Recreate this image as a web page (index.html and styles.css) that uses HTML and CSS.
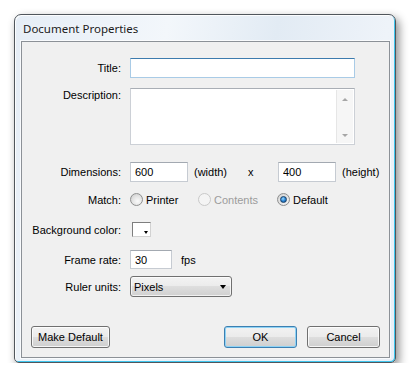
FILE: index.html
```html
<!DOCTYPE html>
<html lang="en">
<head>
    <meta charset="UTF-8">
    <title>Document Properties</title>
    <link rel="stylesheet" href="styles.css">
</head>
<body>
    <div class="window">
        <div class="titlebar">Document Properties</div>
        <div class="client">
            <div class="row r-title">
                <span class="lbl">Title:</span>
                <input class="field focused" type="text" value="">
            </div>
            <div class="row r-desc">
                <span class="lbl">Description:</span>
                <div class="area">
                    <div class="area-text"></div>
                    <div class="vscroll">
                        <span class="arr up"></span>
                        <span class="arr down"></span>
                    </div>
                </div>
            </div>
            <div class="row r-dims">
                <span class="lbl">Dimensions:</span>
                <input class="field num" type="text" value="600">
                <span class="unit">(width)</span>
                <span class="times">x</span>
                <input class="field num" type="text" value="400">
                <span class="unit">(height)</span>
            </div>
            <div class="row r-match">
                <span class="lbl">Match:</span>
                <span class="opt w1"><span class="radio"></span>Printer</span>
                <span class="opt w2 disabled"><span class="radio"></span>Contents</span>
                <span class="opt"><span class="radio checked"></span>Default</span>
            </div>
            <div class="row r-bg">
                <span class="lbl">Background color:</span>
                <span class="swatch"><span class="sw-arrow"></span></span>
            </div>
            <div class="row r-fps">
                <span class="lbl">Frame rate:</span>
                <input class="field fps" type="text" value="30">
                <span class="unit fps-unit">fps</span>
            </div>
            <div class="row r-ruler">
                <span class="lbl">Ruler units:</span>
                <div class="select"><span>Pixels</span><span class="sel-arrow"></span></div>
            </div>
            <div class="buttons">
                <button class="btn wide">Make Default</button>
                <button class="btn ok">OK</button>
                <button class="btn cancel">Cancel</button>
            </div>
        </div>
    </div>
</body>
</html>
```

FILE: styles.css
```css
body {
    margin: 0;
    background: #fff;
    font-family: "Liberation Sans", Arial, sans-serif;
    font-size: 11px;
    color: #000;
}
.window {
    margin: 14px 0 0 14px;
    width: 382px;
    height: 349px;
    box-sizing: border-box;
    border: 1px solid #50565c;
    border-radius: 7px 7px 5px 5px;
    padding: 0 5px 4px 6px;
    background: linear-gradient(100deg, #e5edf6 0%, #f3f7fb 35%, #e2ebf4 60%, #eef3f9 85%, #e8eff7 100%);
    box-shadow: inset -1px -1px 0 #3fc6ee, inset 1px 1px 0 rgba(255,255,255,.85), 3px 4px 10px rgba(0,0,0,.45);
    display: flex;
    flex-direction: column;
}
.titlebar {
    height: 26px;
    line-height: 27px;
    padding-left: 2px;
    font-family: "Noto Sans", sans-serif;
    font-size: 11.5px;
    color: #1b1b1b;
    text-shadow: 0 0 6px #fff;
}
.client {
    flex: 1;
    border: 1px solid #8c9197;
    box-shadow: 0 0 0 1px rgba(255,255,255,.7);
    background: #f0f0f0;
    padding: 16px 9px 9px 9px;
    display: flex;
    flex-direction: column;
}
.row {
    display: flex;
    align-items: center;
}
.lbl {
    width: 90px;
    margin-right: 9px;
    text-align: right;
    flex: none;
}
.field {
    box-sizing: border-box;
    height: 20px;
    margin: 0;
    padding: 0 4px;
    font: inherit;
    color: #000;
    background: #fff;
    border: 1px solid #c6cbd2;
    border-top-color: #a3a9b1;
    outline: none;
}
.field.focused {
    width: 225px;
    border-color: #a9cbe6;
    border-top-color: #3d7bad;
}
.r-desc {
    margin-top: 10px;
    align-items: flex-start;
}
.r-desc .lbl {
    line-height: 14px;
}
.area {
    width: 225px;
    height: 57px;
    box-sizing: border-box;
    background: #fff;
    border: 1px solid #ccd0d6;
    border-top-color: #a9aeb5;
    display: flex;
}
.area-text {
    flex: 1;
}
.vscroll {
    width: 16px;
    margin: 1px 1px 1px 0;
    background: #f6f6f6;
    border-left: 1px solid #e6e6e6;
    display: flex;
    flex-direction: column;
    justify-content: space-between;
    align-items: center;
    padding: 8px 0 6px;
}
.arr {
    width: 0;
    height: 0;
    border-left: 3px solid transparent;
    border-right: 3px solid transparent;
}
.arr.up {
    border-bottom: 3px solid #a6a6a6;
}
.arr.down {
    border-top: 3px solid #a6a6a6;
}
.r-dims {
    margin-top: 17px;
}
.num {
    width: 58px;
}
.unit {
    margin-left: 6px;
}
.times {
    width: 50px;
    padding-left: 20px;
    box-sizing: border-box;
}
.r-dims .num + .unit {
    width: 34px;
}
.r-match {
    margin-top: 11px;
    height: 13px;
}
.opt {
    display: flex;
    align-items: center;
    gap: 3px;
}
.opt.w1 {
    width: 68px;
}
.opt.w2 {
    width: 79px;
}
.opt.disabled {
    color: #9c9c9c;
}
.radio {
    width: 13px;
    height: 13px;
    box-sizing: border-box;
    border-radius: 50%;
    border: 1px solid #8e8f8f;
    background: radial-gradient(circle at 60% 65%, #fafafa 0, #e6e6e6 45%, #c9c9c9 100%);
    display: flex;
    align-items: center;
    justify-content: center;
}
.disabled .radio {
    border-color: #c9c9c9;
    background: #f4f4f4;
}
.radio.checked::after {
    content: "";
    width: 7px;
    height: 7px;
    box-sizing: border-box;
    border-radius: 50%;
    border: 1px solid #193f66;
    background: radial-gradient(circle at 40% 35%, #9ad9ff 0, #2b86d6 50%, #0c4785 100%);
}
.r-bg {
    margin-top: 16px;
}
.swatch {
    width: 19px;
    height: 15px;
    margin-left: 2px;
    box-sizing: border-box;
    background: #fff;
    border: 1px solid #d2d2d2;
    border-top-color: #7e7e7e;
    border-left-color: #7e7e7e;
    display: flex;
    align-items: flex-end;
    justify-content: flex-end;
    padding: 0 2px 2px 0;
}
.sw-arrow {
    width: 0;
    height: 0;
    border-left: 2.5px solid transparent;
    border-right: 2.5px solid transparent;
    border-top: 3px solid #000;
}
.r-fps {
    margin-top: 13px;
}
.fps {
    width: 42px;
    height: 19px;
}
.fps-unit {
    margin-left: 9px;
}
.r-ruler {
    margin-top: 7px;
}
.select {
    width: 102px;
    height: 21px;
    box-sizing: border-box;
    border: 1px solid #707070;
    border-radius: 3px;
    background: linear-gradient(#f3f3f3 0%, #ececec 45%, #dedede 50%, #d0d0d0 100%);
    box-shadow: inset 0 0 0 1px rgba(255,255,255,.7);
    display: flex;
    align-items: center;
    justify-content: space-between;
    padding: 0 5px 0 3px;
}
.sel-arrow {
    width: 0;
    height: 0;
    border-left: 3.5px solid transparent;
    border-right: 3.5px solid transparent;
    border-top: 4px solid #000;
}
.buttons {
    margin-top: auto;
    display: flex;
}
.btn {
    height: 22px;
    width: 73px;
    margin: 0;
    padding: 0;
    font: inherit;
    color: #000;
    border: 1px solid #707070;
    border-radius: 3px;
    background: linear-gradient(#f2f2f2 0%, #ebebeb 48%, #dddddd 52%, #cfcfcf 100%);
    box-shadow: inset 0 0 0 1px rgba(255,255,255,.8);
}
.btn.wide {
    width: 79px;
}
.btn.ok {
    margin-left: auto;
    border-color: #3c7fb1;
    box-shadow: inset 0 0 0 1px #8fd3f5;
}
.btn.cancel {
    margin-left: 10px;
}
```
